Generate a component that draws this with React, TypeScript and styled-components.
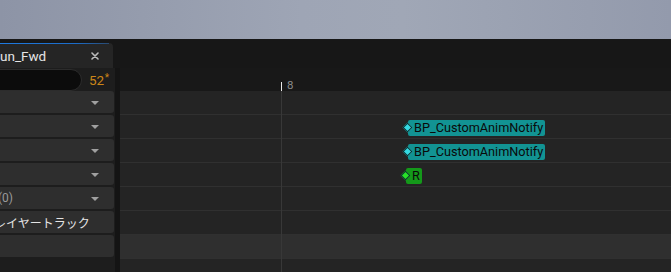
import React from 'react';
import styled, {createGlobalStyle} from 'styled-components';

const GlobalStyle = createGlobalStyle`
  html, body {
    margin: 0;
    padding: 0;
    background: #171717;
    overflow: hidden;
  }
  * {
    box-sizing: border-box;
  }
`;

// time position of the scrubbed frame, in px from the timeline's left edge
const FRAME_8_X = 161;

const tracks = [
  {label: '', menu: true},
  {label: '', menu: true},
  {label: '', menu: true},
  {label: '', menu: true},
  {label: '(0)', menu: true, muted: true, indent: -2},
  {label: 'レイヤートラック', menu: false, indent: -6},
  {label: '', menu: false},
];

interface INotify {
  lane: number;
  x: number;
  label: string;
  kind: 'blueprint' | 'state';
}

const notifies: INotify[] = [
  {lane: 1, x: 288, label: 'BP_CustomAnimNotify', kind: 'blueprint'},
  {lane: 2, x: 288, label: 'BP_CustomAnimNotify', kind: 'blueprint'},
  {lane: 3, x: 286, label: 'R', kind: 'state'},
];

const App = () => {
  return (
    <>
      <GlobalStyle />
      <Screen>
        <Backdrop />
        <Editor>
          <TabBar>
            <Tab>
              <TabTitle>un_Fwd</TabTitle>
              <CloseButton>
                <svg width="8" height="8" viewBox="0 0 8 8">
                  <path
                    d="M1 1 L7 7 M7 1 L1 7"
                    stroke="#bdbdbd"
                    strokeWidth="1.6"
                    strokeLinecap="round"
                  />
                </svg>
              </CloseButton>
            </Tab>
          </TabBar>

          <Body>
            <TrackPanel>
              <FilterRow>
                <SearchBox />
                <Count>
                  52<sup>*</sup>
                </Count>
              </FilterRow>
              {tracks.map((t, i) => (
                <TrackRow key={i}>
                  <TrackLabel $muted={t.muted} $indent={t.indent || 0}>
                    {t.label}
                  </TrackLabel>
                  {t.menu && <DropArrow />}
                </TrackRow>
              ))}
            </TrackPanel>

            <Splitter />

            <Timeline>
              <Ruler>
                <Tick style={{left: FRAME_8_X}} />
                <TickLabel style={{left: FRAME_8_X + 6}}>8</TickLabel>
              </Ruler>
              {tracks.map((_, i) => (
                <Lane key={i} $highlight={i === 6}>
                  {notifies
                    .filter((n) => n.lane === i)
                    .map((n, j) => (
                      <Notify key={j} $kind={n.kind} style={{left: n.x}}>
                        <Diamond $kind={n.kind} />
                        {n.label}
                      </Notify>
                    ))}
                </Lane>
              ))}
              <GridLine style={{left: FRAME_8_X}} />
            </Timeline>
          </Body>
        </Editor>
      </Screen>
    </>
  );
};

const Screen = styled.div`
  width: 671px;
  height: 272px;
  display: flex;
  flex-direction: column;
  font-family: Roboto, 'Noto Sans CJK JP', sans-serif;
  overflow: hidden;
`;

const Backdrop = styled.div`
  height: 39px;
  flex: none;
  background: linear-gradient(90deg, #8d94a6 0%, #9ea5b5 45%, #a0a7b6 60%, #939aac 100%);
`;

const Editor = styled.div`
  flex: 1;
  display: flex;
  flex-direction: column;
  background: #171717;
  min-height: 0;
`;

const TabBar = styled.div`
  height: 29px;
  flex: none;
  padding-top: 4px;
  display: flex;
`;

const Tab = styled.div`
  width: 113px;
  height: 25px;
  display: flex;
  align-items: center;
  justify-content: space-between;
  padding: 1px 14px 0 0;
  background: #252525;
  border-top-right-radius: 4px;
  position: relative;

  &::before {
    content: '';
    position: absolute;
    top: 0;
    left: 0;
    right: 4px;
    height: 1px;
    background: linear-gradient(90deg, #1f7ae0, #1c6cc8 70%, #2a4a70);
  }
`;

const TabTitle = styled.span`
  color: #e6e6e6;
  font-size: 13.5px;
  white-space: nowrap;
`;

const CloseButton = styled.span`
  display: flex;
  align-items: center;
  margin-top: -1px;
`;

const Body = styled.div`
  flex: 1;
  display: flex;
  min-height: 0;
`;

const TrackPanel = styled.div`
  width: 115px;
  flex: none;
  background: #1d1d1d;
  overflow: hidden;
  display: flex;
  flex-direction: column;
`;

const FilterRow = styled.div`
  height: 23px;
  flex: none;
  display: flex;
  align-items: flex-start;
  padding-top: 1px;
`;

const SearchBox = styled.div`
  width: 106px;
  height: 22px;
  margin-left: -24px;
  flex: none;
  background: #0c0c0c;
  border: 1px solid #2c2c2c;
  border-radius: 11px;
`;

const Count = styled.span`
  margin-left: 7px;
  margin-top: 3px;
  color: #cc8618;
  font-size: 13.5px;
  line-height: 16px;

  sup {
    font-size: 10px;
    vertical-align: top;
    line-height: 12px;
    margin-left: 0.5px;
  }
`;

const TrackRow = styled.div`
  height: 22px;
  flex: none;
  margin: 0 1px 2px 0;
  display: flex;
  align-items: center;
  justify-content: space-between;
  padding-right: 15px;
  background: #2e2e2e;
  border-radius: 0 3px 3px 0;
`;

const TrackLabel = styled.span<{$muted?: boolean; $indent: number}>`
  margin-left: ${(p) => p.$indent}px;
  font-size: 12px;
  color: ${(p) => (p.$muted ? '#9a9a9a' : '#e4e4e4')};
  white-space: nowrap;
`;

const DropArrow = styled.span`
  width: 0;
  height: 0;
  border-left: 4px solid transparent;
  border-right: 4px solid transparent;
  border-top: 4px solid #a0a0a0;
  margin-top: 1px;
`;

const Splitter = styled.div`
  width: 5px;
  flex: none;
  background: #141414;
`;

const Timeline = styled.div`
  flex: 1;
  position: relative;
  background: #242424;
  display: flex;
  flex-direction: column;
  overflow: hidden;
`;

const Ruler = styled.div`
  height: 23px;
  flex: none;
  background: #181818;
  position: relative;
`;

const Tick = styled.div`
  position: absolute;
  bottom: 0;
  width: 1px;
  height: 9px;
  background: #e8e8e8;
`;

const TickLabel = styled.span`
  position: absolute;
  top: 12px;
  font-size: 11.5px;
  line-height: 11px;
  color: #8c8c8c;
`;

const Lane = styled.div<{$highlight?: boolean}>`
  height: 24px;
  flex: none;
  position: relative;
  background: ${(p) => (p.$highlight ? '#2f2f2f' : '#242424')};
  border-bottom: 1px solid #303030;
`;

const GridLine = styled.div`
  position: absolute;
  top: 23px;
  bottom: 0;
  width: 1px;
  background: #383838;
`;

const Notify = styled.div<{$kind: 'blueprint' | 'state'}>`
  position: absolute;
  top: 5px;
  height: 16px;
  display: flex;
  align-items: center;
  padding: 0 2px 0 6px;
  border-radius: 2px;
  background: ${(p) => (p.$kind === 'blueprint' ? '#129393' : '#14991a')};
  color: #0a0a0a;
  font-size: 12.7px;
  line-height: 16px;
  white-space: nowrap;
`;

const Diamond = styled.span<{$kind: 'blueprint' | 'state'}>`
  position: absolute;
  left: -4px;
  top: 4px;
  width: 7px;
  height: 7px;
  transform: rotate(45deg);
  background: ${(p) => (p.$kind === 'blueprint' ? '#35d9e2' : '#28e228')};
  border: 1px solid #0c3030;
`;

export default App;
